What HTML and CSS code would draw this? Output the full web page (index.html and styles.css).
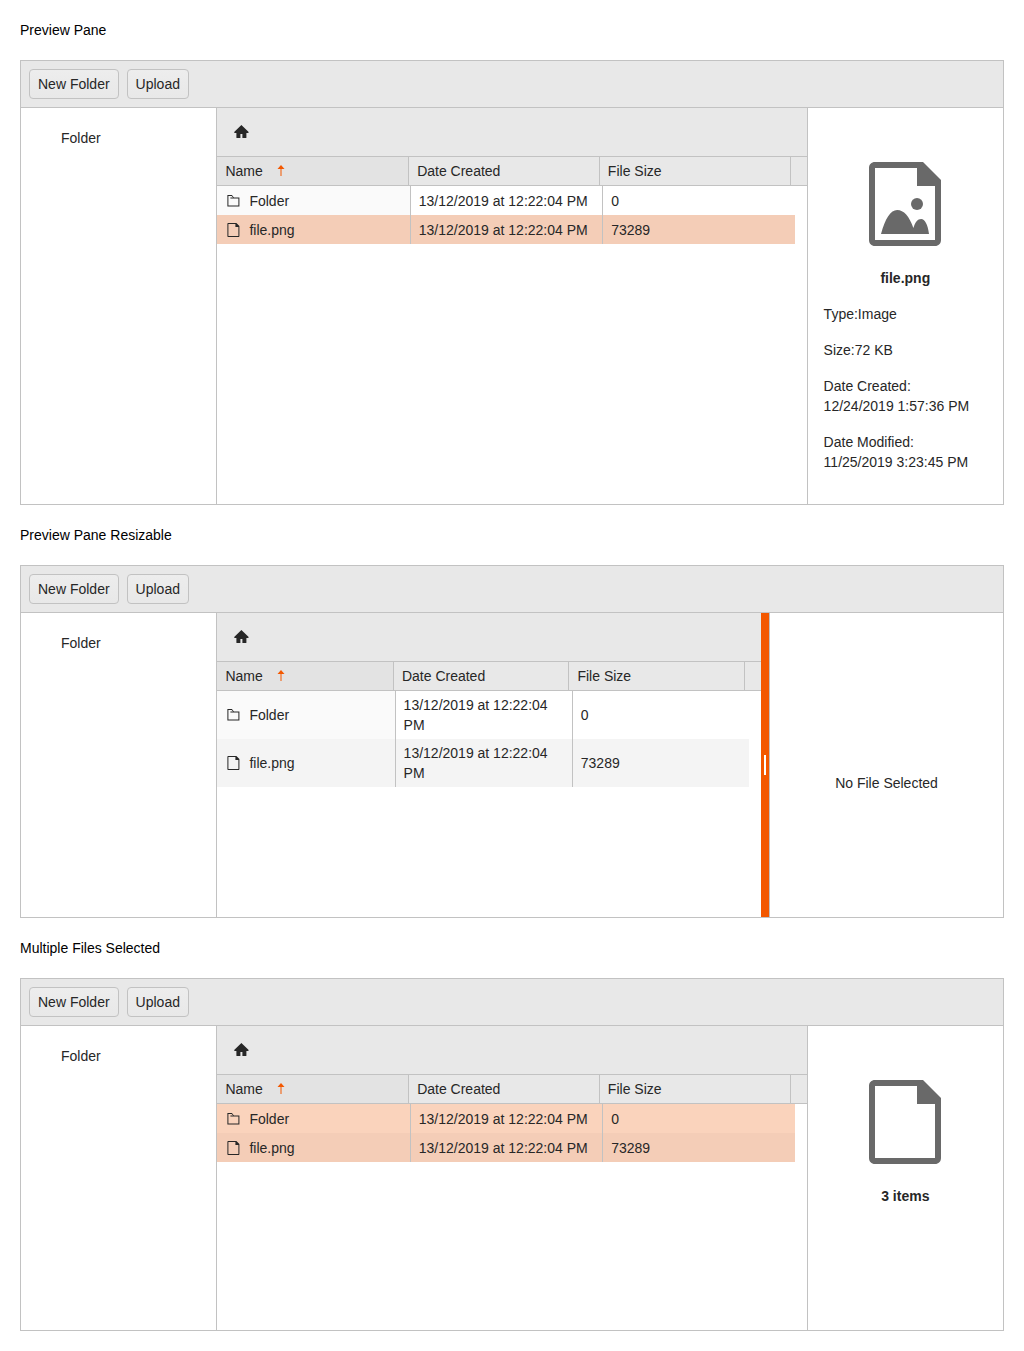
FILE: index.html
```html
<!DOCTYPE html>
<html lang="en">
<head>
<meta charset="utf-8">
<meta name="viewport" content="width=device-width, initial-scale=1">
<title>File Manager Preview Pane</title>
<link rel="stylesheet" href="styles.css">
</head>
<body>
<svg class="sprite" aria-hidden="true">
  <symbol id="home" viewBox="-.4 0 16 16"><path d="M8 1L.5 8.200 1.500 9H3v4.500q0 .5.5.500H7v-4h2v4h3.500q.5 0 .5-.5V9h1.500l1-.8z"/></symbol>
  <symbol id="sort" viewBox="0 0 16 16"><path d="M8 2L4.500 6h3v7h1V6h3z"/></symbol>
  <symbol id="folder" viewBox="-.4 0 16 16"><path fill-rule="evenodd" d="M6.500 2H2v11.500h12V4.500H8.500zM3 3h3.200l1.500 1.500H5v1h8v7H3z"/></symbol>
  <symbol id="document" viewBox="-.4 0 16 16"><path fill-rule="evenodd" d="M11 1H3C2.400 1 2 1.400 2 2v12c0 .6.4 1 1 1h10c.6 0 1-.4 1-1V4zM13 14H3V2h7v3h3z"/></symbol>
  <symbol id="file" viewBox="0 0 16 16"><path fill-rule="evenodd" d="M11 1H3C2.400 1 2 1.400 2 2v12c0 .6.4 1 1 1h10c.6 0 1-.4 1-1V4zM13 14H3V2h7v3h3z"/></symbol>
  <symbol id="image" viewBox="0 0 16 16"><path fill-rule="evenodd" d="M11 1H3C2.400 1 2 1.400 2 2v12c0 .6.4 1 1 1h10c.6 0 1-.4 1-1V4zM13 14H3V2h7v3h3z"/><circle cx="10" cy="8" r="1"/><path d="M4 13C4.700 10.400 5.600 9 6.700 9S8.700 10 9.400 12C9.700 11 10.100 10.500 10.700 10.500S11.800 11.400 12 13z"/></symbol>
</svg>

<h2 class="title">Preview Pane</h2>
<section class="manager">
  <div class="toolbar">
    <button class="button" type="button">New Folder</button>
    <button class="button" type="button">Upload</button>
  </div>
  <div class="panes">
    <nav class="tree"><a class="tree-item" href="#">Folder</a></nav>
    <div class="content">
      <div class="breadcrumb"><a class="crumb" href="#" aria-label="Home"><svg class="icon"><use href="#home"/></svg></a></div>
      <table class="grid">
        <thead><tr><th class="sorted">Name<svg class="icon sort"><use href="#sort"/></svg></th><th>Date Created</th><th>File Size</th><td></td></tr></thead>
        <tbody>
          <tr><td class="name"><svg class="icon"><use href="#folder"/></svg>Folder</td><td>13/12/2019 at 12:22:04 PM</td><td>0</td></tr>
          <tr class="selected"><td class="name"><svg class="icon"><use href="#document"/></svg>file.png</td><td>13/12/2019 at 12:22:04 PM</td><td>73289</td></tr>
        </tbody>
      </table>
    </div>
    <aside class="preview">
      <svg class="preview-icon"><use href="#image"/></svg>
      <p class="preview-name">file.png</p>
      <dl class="details">
        <div class="detail"><dt>Type:</dt><dd>Image</dd></div>
        <div class="detail"><dt>Size:</dt><dd>72 KB</dd></div>
        <div class="detail stacked"><dt>Date Created:</dt><dd>12/24/2019 1:57:36 PM</dd></div>
        <div class="detail stacked"><dt>Date Modified:</dt><dd>11/25/2019 3:23:45 PM</dd></div>
      </dl>
    </aside>
  </div>
</section>

<h2 class="title">Preview Pane Resizable</h2>
<section class="manager">
  <div class="toolbar">
    <button class="button" type="button">New Folder</button>
    <button class="button" type="button">Upload</button>
  </div>
  <div class="panes">
    <nav class="tree"><a class="tree-item" href="#">Folder</a></nav>
    <div class="content">
      <div class="breadcrumb"><a class="crumb" href="#" aria-label="Home"><svg class="icon"><use href="#home"/></svg></a></div>
      <table class="grid">
        <thead><tr><th class="sorted">Name<svg class="icon sort"><use href="#sort"/></svg></th><th>Date Created</th><th>File Size</th><td></td></tr></thead>
        <tbody>
          <tr><td class="name"><svg class="icon"><use href="#folder"/></svg>Folder</td><td>13/12/2019 at 12:22:04 PM</td><td>0</td></tr>
          <tr><td class="name"><svg class="icon"><use href="#document"/></svg>file.png</td><td>13/12/2019 at 12:22:04 PM</td><td>73289</td></tr>
        </tbody>
      </table>
    </div>
    <div class="splitter" role="separator" aria-orientation="vertical"><span class="grip"></span></div>
    <aside class="preview resized">
      <p class="no-file">No File Selected</p>
    </aside>
  </div>
</section>

<h2 class="title">Multiple Files Selected</h2>
<section class="manager">
  <div class="toolbar">
    <button class="button" type="button">New Folder</button>
    <button class="button" type="button">Upload</button>
  </div>
  <div class="panes">
    <nav class="tree"><a class="tree-item" href="#">Folder</a></nav>
    <div class="content">
      <div class="breadcrumb"><a class="crumb" href="#" aria-label="Home"><svg class="icon"><use href="#home"/></svg></a></div>
      <table class="grid">
        <thead><tr><th class="sorted">Name<svg class="icon sort"><use href="#sort"/></svg></th><th>Date Created</th><th>File Size</th><td></td></tr></thead>
        <tbody>
          <tr class="selected"><td class="name"><svg class="icon"><use href="#folder"/></svg>Folder</td><td>13/12/2019 at 12:22:04 PM</td><td>0</td></tr>
          <tr class="selected"><td class="name"><svg class="icon"><use href="#document"/></svg>file.png</td><td>13/12/2019 at 12:22:04 PM</td><td>73289</td></tr>
        </tbody>
      </table>
    </div>
    <aside class="preview">
      <svg class="preview-icon"><use href="#file"/></svg>
      <p class="preview-name">3 items</p>
    </aside>
  </div>
</section>
</body>
</html>
```
FILE: styles.css
```css
* {
  box-sizing: border-box;
}

body {
  margin: 0;
  padding: 20px;
  background: #fff;
  color: #000;
  font: 14px/20px "Liberation Sans", Arial, sans-serif;
}

.sprite {
  display: none;
}

.title {
  margin: 0 0 20px;
  font-size: 14px;
  font-weight: 400;
}

.manager {
  border: 1px solid #c2c2c2;
  color: #272727;
}

.manager + .title {
  margin-top: 20px;
}

.toolbar {
  display: flex;
  gap: 8px;
  padding: 8px;
  background: #e8e8e8;
  border-bottom: 1px solid #c2c2c2;
}

.button {
  padding: 4px 8px;
  border: 1px solid #c2c2c2;
  border-radius: 4px;
  background: linear-gradient(#ededed, #e8e8e8);
  color: inherit;
  font: inherit;
}

.panes {
  display: flex;
  min-height: 304px;
}

.tree {
  flex: 0 0 20%;
  padding: 20px 16px 16px 40px;
  border-right: 1px solid #c2c2c2;
}

.tree-item,
.crumb {
  display: block;
  color: inherit;
  text-decoration: none;
}

.content {
  flex: 1;
  min-width: 0;
}

.breadcrumb {
  display: flex;
  align-items: center;
  height: 48px;
  padding: 0 16px;
  background: #e8e8e8;
}

.icon {
  display: block;
  flex: none;
  width: 16px;
  height: 16px;
  fill: currentColor;
}

.grid,
.grid thead,
.grid tbody {
  display: block;
}

.grid thead {
  border: solid #c2c2c2;
  border-width: 1px 0;
  background: #e8e8e8;
}

.grid tbody {
  padding-right: 12px;
}

.grid tr {
  display: grid;
  grid-template-columns: repeat(3, minmax(0, 1fr));
}

.grid thead tr {
  grid-template-columns: repeat(3, minmax(0, 1fr)) 17px;
}

.grid th,
.grid td {
  display: flex;
  align-items: center;
  padding: 4px 8px;
  border-left: 1px solid #c2c2c2;
  font-weight: 400;
  text-align: left;
}

.grid tr > :first-child {
  border-left: 0;
}

.grid tbody tr {
  min-height: 29px;
}

.grid .sorted {
  gap: 10px;
  background: #e3e3e3;
}

.sort {
  color: #f35800;
}

.grid .name {
  gap: 8px;
  background: #fafafa;
}

.grid tbody tr:nth-child(even) {
  background: #f4f4f4;
}

.grid tbody tr.selected {
  background: #fad3bc;
}

.grid tbody tr.selected:nth-child(even) {
  background: #f4cdb7;
}

.grid tr:nth-child(even) .name,
.grid .selected .name {
  background: none;
}

.splitter {
  display: flex;
  flex: 0 0 8px;
  align-items: center;
  justify-content: center;
  background: #f35800;
}

.grip {
  width: 2px;
  height: 20px;
  background: #fff;
}

.preview {
  display: flex;
  flex: 0 0 20%;
  flex-direction: column;
  padding: 48px 16px 12px;
  border-left: 1px solid #c2c2c2;
}

.preview.resized {
  flex-basis: 234px;
}

.preview-icon {
  align-self: center;
  width: 96px;
  height: 96px;
  fill: #696969;
}

.preview-name {
  margin: 16px 0 0;
  font-weight: 700;
  text-align: center;
}

.details {
  margin: 0 0 4px;
}

.detail {
  margin: 16px 0;
}

.detail dt,
.detail dd {
  display: inline;
  margin: 0;
}

.stacked dt,
.stacked dd {
  display: block;
}

.no-file {
  margin: auto;
}
```
